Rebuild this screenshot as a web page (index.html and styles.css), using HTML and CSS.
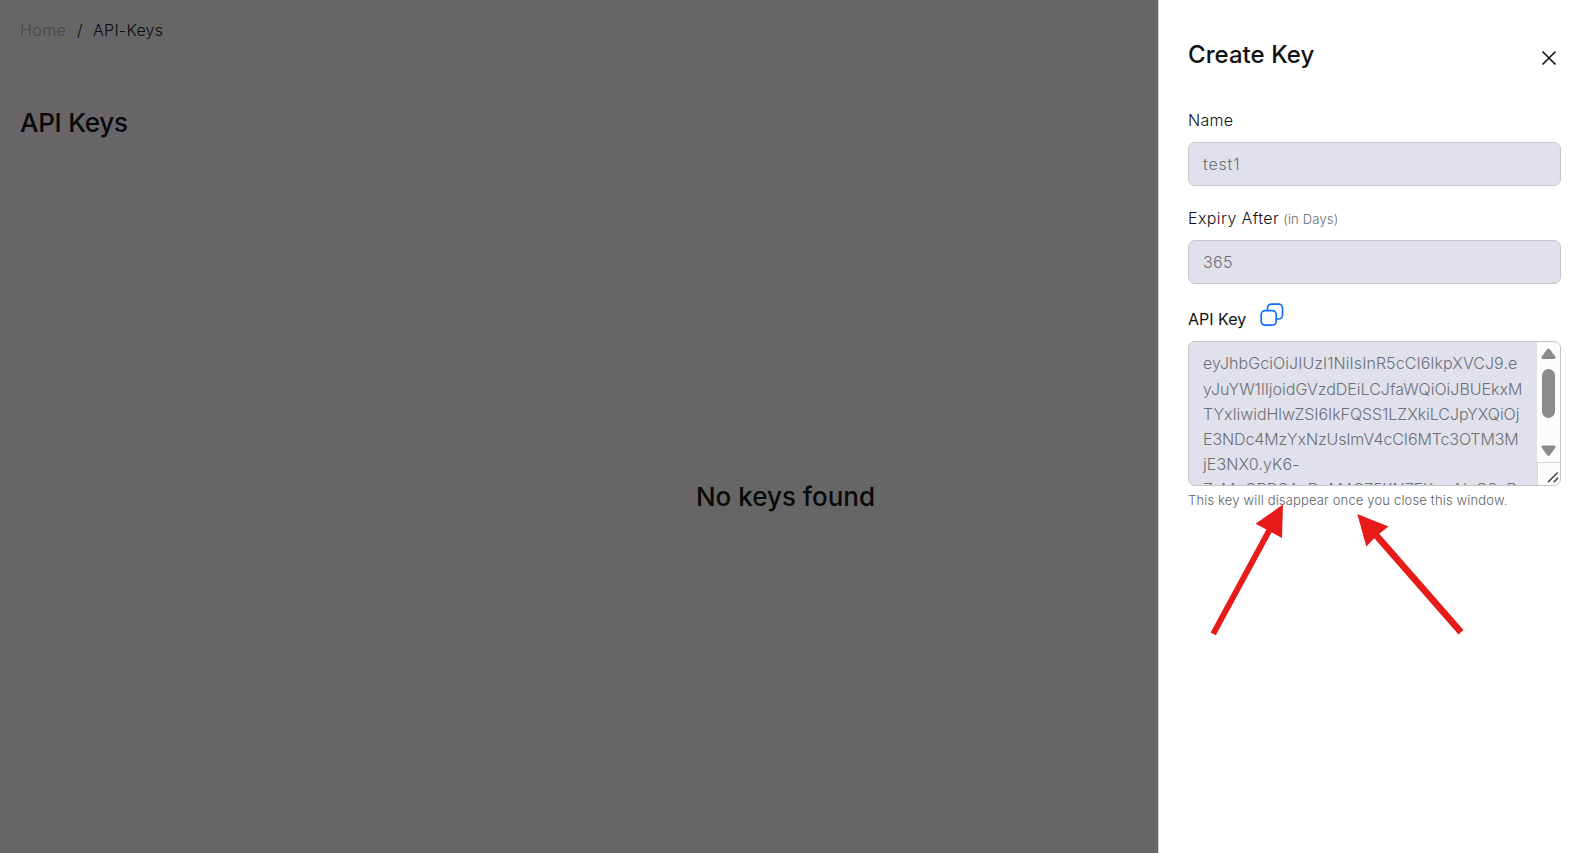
FILE: index.html
```html
<!DOCTYPE html>
<html lang="en">
<head>
<meta charset="utf-8">
<title>API Keys</title>
<link rel="stylesheet" href="styles.css">
</head>
<body>
<div class="app">
  <main class="page">
    <nav class="crumbs"><span class="crumb-home">Home</span><span class="crumb-sep">/</span><span class="crumb-current">API-Keys</span></nav>
    <section class="content">
      <h1 class="page-title"><span>API Keys</span></h1>
      <div class="card"><p class="empty">No keys found</p></div>
    </section>
  </main>
  <aside class="drawer">
    <header class="drawer-head">
      <h2 class="drawer-title">Create Key</h2>
      <svg class="close" viewBox="0 0 16 16"><path d="M1.5 1.5 14.5 14.5M14.5 1.5 1.5 14.5"/></svg>
    </header>
    <div class="label"><span class="l-name">Name</span></div>
    <div class="field"><span class="v-name">test1</span></div>
    <div class="label label-expiry"><span class="l-exp">Expiry After</span><small class="l-days">(in Days)</small></div>
    <div class="field"><span class="v-exp">365</span></div>
    <div class="label label-key"><span class="l-key">API Key</span>
      <svg class="copy" viewBox="0 0 24 24"><rect x="1.2" y="7.6" width="15" height="14.6" rx="4"/><path d="M7.5 7.4V5.2a4 4 0 0 1 4-4h7a4 4 0 0 1 4 4v6.8a4 4 0 0 1-4 4h-2"/></svg>
    </div>
    <div class="area">
      <div class="token">
        <div class="t1">eyJhbGciOiJIUzI1NiIsInR5cCI6IkpXVCJ9.e</div>
        <div class="t2">yJuYW1lIjoidGVzdDEiLCJfaWQiOiJBUEkxM</div>
        <div class="t3">TYxIiwidHlwZSI6IkFQSS1LZXkiLCJpYXQiOj</div>
        <div class="t4">E3NDc4MzYxNzUsImV4cCI6MTc3OTM3M</div>
        <div class="t5">jE3NX0.yK6-</div>
        <div class="t6">ZsMgCBBCAcDuM4C75KN7FKgwNyG8uR</div>
      </div>
      <div class="scroll">
        <svg class="bar" viewBox="0 0 23 120"><path class="arrow" d="M10.2 7.2q1.3-1.4 2.6 0l5.4 7.4q1.1 2.4-1.2 2.4H6q-2.3 0-1.2-2.4z"/><rect class="thumb" x="5" y="27" width="13" height="49" rx="6.5"/><path class="arrow" d="M10.2 113.3q1.3 1.4 2.6 0l5.4-7.4q1.1-2.4-1.2-2.4H6q-2.3 0-1.2 2.4z"/></svg>
        <svg class="grip" viewBox="0 0 23 22"><path d="M10.5 19.5 20.5 9.5M16.5 19.5 21 15"/></svg>
      </div>
    </div>
    <p class="hint"><span>This key will disappear once you close this window.</span></p>
  </aside>
  <svg class="arrows" viewBox="0 0 300 160"><path d="M20.6 142.5 76.4 39.5 65.6 33.8 93 14.5 92 48 81.6 42.3 25.8 145.3z"/><path d="M167.3 24 198.5 36.5 189.3 43.8 273.5 140 268.5 144.5 184.3 48.2 176.3 56.5z"/></svg>
</div>
</body>
</html>
```
FILE: styles.css
```css
*{box-sizing:border-box}
body{margin:0;font:400 16px/24px Inter,"Open Sans",sans-serif;color:#111;overflow:hidden}
h1,h2,p{margin:0;font-weight:500}
span,small,.token div{white-space:nowrap}
.app{position:relative;display:flex;width:1587px;height:853px;background:#676568}
.page{width:1158px;flex:none;display:flex;flex-direction:column}
.crumbs{height:64px;background:#666;padding:18px 20px;display:flex;font-weight:300;color:#0b0b0b;letter-spacing:.28px}
.crumb-home{width:57px;color:#474849;letter-spacing:.4px}
.crumb-sep{width:16px}
.content{flex:1;padding:40px 0 21px 20px;display:flex;flex-direction:column}
.page-title{height:59px;font-size:26px;line-height:38px;color:#090909;letter-spacing:-.25px}
.card{flex:1;background:#666;border-radius:8px 0 0 8px;display:flex;align-items:center;justify-content:center;padding:0 0 2px 393px}
.empty{font-size:26px;line-height:32px;color:#090909}
.drawer{width:429px;flex:none;background:#fff;border-left:1px solid #cfcfd6;padding:39px 26px 0 29px}
.drawer-head{display:flex;justify-content:space-between;height:69px}
.drawer-title{font-size:24px;line-height:32px;letter-spacing:.05px}
.close{width:16px;height:16px;margin:11px 4px 0 0;fill:none;stroke:#111;stroke-width:1.6}
.label{display:flex;height:34px;font-weight:300;line-height:24px}
.l-name{letter-spacing:.3px}
.v-name{letter-spacing:.8px}
.l-exp{letter-spacing:.4px}
.v-exp{letter-spacing:.3px}
.label-expiry{margin-top:20px}
.l-days{margin-left:4px;font-size:13px;line-height:26px;color:#666a70;letter-spacing:.18px}
.label-key{margin-top:18px;height:39px;line-height:34px;font-weight:400}
.copy{width:24px;height:24px;margin:1px 0 0 14px;fill:none;stroke:#0d6efd;stroke-width:1.7}
.field{height:44px;border:1px solid #c5c5d2;border-radius:7px;background:#e1e1eb;padding:9px 14px;font-weight:300;color:#6b7077}
.area{height:145px;border:1px solid #c5c5d2;border-radius:7px;background:#e1e1eb;display:flex;justify-content:space-between;overflow:hidden}
.token{padding:9.4px 0 0 14px;line-height:25.2px;font-weight:300;color:#6b7077;width:348px;height:143px;overflow:hidden}
.t1{letter-spacing:.06px}
.t3{letter-spacing:-.06px}
.t4{letter-spacing:-.12px}
.t5{letter-spacing:.1px}
.t6{letter-spacing:-.1px}
.scroll{width:23px;flex:none;background:#fcfcfc;display:flex;flex-direction:column}
.bar{width:23px;height:120px}
.arrow,.thumb{fill:#8b8b8b}
.grip{width:23px;height:23px;border-top:1px solid #d5d5dc;border-left:1px solid #d5d5dc;fill:none;stroke:#444;stroke-width:1.5}
.hint{font-size:13px;line-height:20px;margin-top:4px;font-weight:300;color:#5c626a;letter-spacing:.16px}
.arrows{position:absolute;left:1190px;top:490px;width:300px;height:160px;fill:#e81b1b}
```
